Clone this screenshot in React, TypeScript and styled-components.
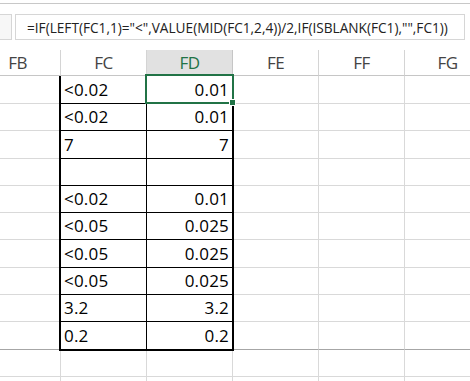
import React, { FC } from 'react';
import styled, { createGlobalStyle, css } from 'styled-components';

const GlobalStyle = createGlobalStyle`
  html, body {
    margin: 0;
    padding: 0;
    background: #fff;
    overflow: hidden;
  }
`;

const Page = styled.div`
  width: 470px;
  height: 381px;
  overflow: hidden;
  background: #fff;
`;

const TopStrip = styled.div`
  height: 3px;
  border-bottom: 1px solid #c8c8c8;
`;

const FormulaRow = styled.div`
  display: flex;
  gap: 3px;
  margin-top: 10px;
  height: 26px;
  padding-right: 5px;
`;

const NameBoxEdge = styled.div`
  width: 12px;
  box-sizing: border-box;
  border: 1px solid #d6d6d6;
  border-left: none;
  background: #f7f7f7;
`;

const FormulaBox = styled.div`
  flex: 1;
  box-sizing: border-box;
  border: 1px solid #d6d6d6;
  background: #fff;
  display: flex;
  align-items: center;
  padding-left: 11px;
  font-family: "Open Sans", "Noto Sans", sans-serif;
  font-size: 13.65px;
  color: #222;
  white-space: nowrap;
  overflow: hidden;
`;

const Sheet = styled.div`
  margin-top: 10px;
  margin-left: -25px;
`;

const Row = styled.div<{ $h: number }>`
  display: flex;
  height: ${p => p.$h}px;
  box-sizing: border-box;
`;

const HeaderCell = styled.div<{ $active?: boolean }>`
  width: 86px;
  flex: none;
  box-sizing: border-box;
  border-right: 1px solid #d4d4d4;
  border-bottom: 1px solid #c6c6c6;
  display: flex;
  align-items: center;
  justify-content: center;
  padding-bottom: 1px;
  font-family: "Open Sans", "Noto Sans", sans-serif;
  font-size: 17px;
  letter-spacing: -0.6px;
  color: #444;
  background: ${p => (p.$active ? '#e1e1e1' : '#fff')};
  ${p => p.$active && css`
    color: #217346;
    border-right-color: #c6c6c6;
  `}
`;

type Edge = { left?: boolean; right?: boolean; bottom?: boolean };

const Cell = styled.div<{ $align?: 'left' | 'right'; $box?: Edge; $split?: boolean }>`
  position: relative;
  width: 86px;
  flex: none;
  box-sizing: border-box;
  border-right: 1px solid #d9d9d9;
  border-bottom: 1px solid ${p => (p.$split ? '#a6a6a6' : '#d9d9d9')};
  display: flex;
  align-items: flex-end;
  justify-content: ${p => (p.$align === 'right' ? 'flex-end' : 'flex-start')};
  padding: 0 3px 3px 3px;
  font-family: "Open Sans", "Noto Sans", sans-serif;
  font-size: 17px;
  line-height: 20px;
  letter-spacing: 0.2px;
  color: #000;
  ${p => p.$box && css`
    &::after {
      content: '';
      position: absolute;
      z-index: 1;
      pointer-events: none;
      top: 0;
      left: ${p.$box.left ? '-2px' : '-1px'};
      right: ${p.$box.right ? '-2px' : '-1px'};
      bottom: ${p.$box.bottom ? '-2px' : '-1px'};
      border-left: ${p.$box.left ? '2px' : '1px'} solid #000;
      border-right: ${p.$box.right ? '2px' : '1px'} solid #000;
      border-bottom: ${p.$box.bottom ? '2px' : '1px'} solid #000;
    }
  `}
`;

const Selection = styled.div`
  position: absolute;
  z-index: 2;
  top: -2px;
  left: -2px;
  right: -2px;
  bottom: -1px;
  border: 2px solid #217346;
  pointer-events: none;
`;

const FillHandle = styled.div`
  position: absolute;
  z-index: 3;
  right: -4px;
  bottom: -4px;
  width: 5px;
  height: 5px;
  background: #217346;
  border: 1px solid #fff;
`;

const Value = styled.span`
  position: relative;
  z-index: 4;
`;

const COLUMNS = ['FB', 'FC', 'FD', 'FE', 'FF', 'FG'];
const ROW_H = 27.3;

const DATA: [string, string][] = [
  ['<0.02', '0.01'],
  ['<0.02', '0.01'],
  ['7', '7'],
  ['', ''],
  ['<0.02', '0.01'],
  ['<0.05', '0.025'],
  ['<0.05', '0.025'],
  ['<0.05', '0.025'],
  ['3.2', '3.2'],
  ['0.2', '0.2'],
];

const FORMULA = '=IF(LEFT(FC1,1)="<",VALUE(MID(FC1,2,4))/2,IF(ISBLANK(FC1),"",FC1))';

const App: FC = () => {
  const last = DATA.length - 1;
  return (
    <Page>
      <GlobalStyle />
      <TopStrip />
      <FormulaRow>
        <NameBoxEdge />
        <FormulaBox>{FORMULA}</FormulaBox>
      </FormulaRow>
      <Sheet>
        <Row $h={26}>
          {COLUMNS.map(c => (
            <HeaderCell key={c} $active={c === 'FD'}>{c}</HeaderCell>
          ))}
        </Row>
        {DATA.map(([fc, fd], i) => {
          const split = i === last;
          return (
            <Row key={i} $h={i === 0 ? 28 : ROW_H}>
              <Cell $split={split} />
              <Cell $split={split} $box={{ left: true, bottom: split }}>
                <Value>{fc}</Value>
              </Cell>
              <Cell $split={split} $align="right" $box={{ right: true, bottom: split }}>
                {i === 0 && (
                  <Selection>
                    <FillHandle />
                  </Selection>
                )}
                <Value>{fd}</Value>
              </Cell>
              <Cell $split={split} />
              <Cell $split={split} />
              <Cell $split={split} />
            </Row>
          );
        })}
        {[0, 1].map(i => (
          <Row key={`e${i}`} $h={ROW_H}>
            {COLUMNS.map(c => <Cell key={c} />)}
          </Row>
        ))}
      </Sheet>
    </Page>
  );
};

export default App;
